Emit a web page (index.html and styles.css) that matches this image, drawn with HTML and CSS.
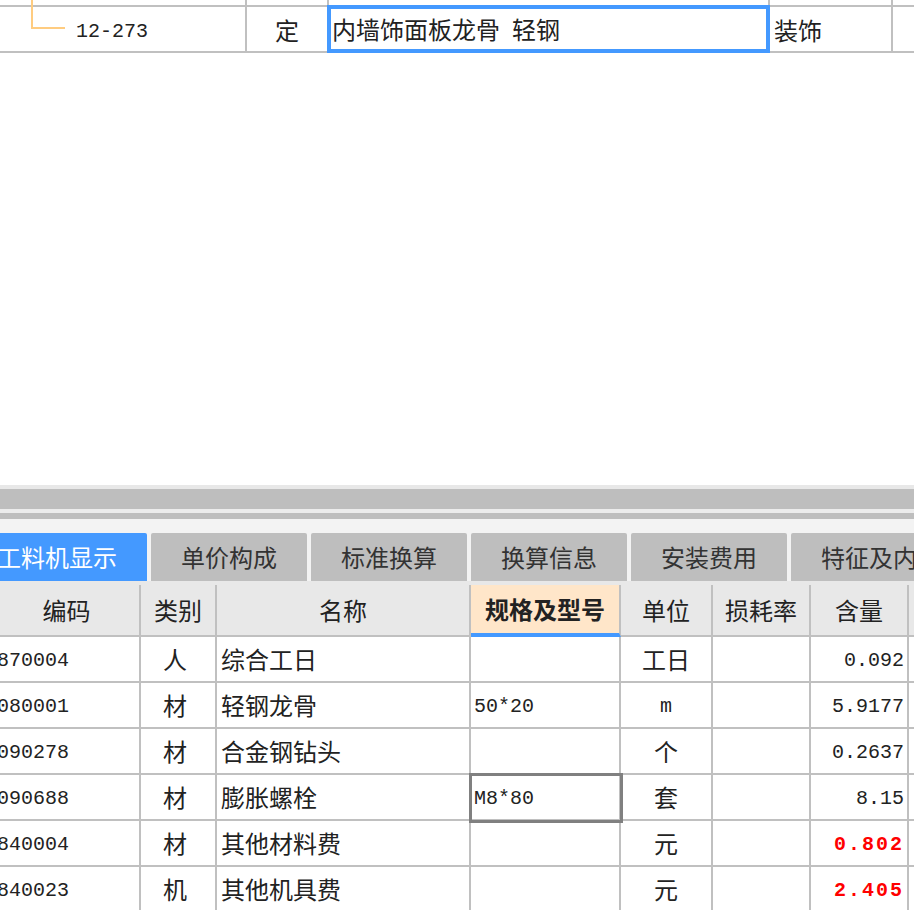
FILE: index.html
```html
<!DOCTYPE html>
<html lang="zh-CN">
<head>
<meta charset="utf-8">
<title>工料机显示</title>
<link rel="stylesheet" href="styles.css">
</head>
<body>
<div class="page">
  <section class="upper">
    <div class="urow prev">
      <div class="uc"></div><div class="uc"></div><div class="uc"></div><div class="uc"></div><div class="uc last"></div>
    </div>
    <div class="urow cur">
      <div class="uc code mono"><span class="tree"></span>12-273</div>
      <div class="uc type">定</div>
      <div class="uc name-sel">内墙饰面板龙骨&ensp;轻钢</div>
      <div class="uc major">装饰</div>
      <div class="uc last"></div>
    </div>
  </section>

  <div class="splitter">
    <div class="sp sp1"></div>
    <div class="sp sp2"></div>
    <div class="sp sp3"></div>
    <div class="sp sp4"></div>
  </div>

  <nav class="tabs">
    <div class="tab active">工料机显示</div>
    <div class="tab">单价构成</div>
    <div class="tab">标准换算</div>
    <div class="tab">换算信息</div>
    <div class="tab">安装费用</div>
    <div class="tab">特征及内容</div>
  </nav>

  <div class="grid">
    <div class="head">
      <div class="gr hrow">
        <div class="hc">编码</div>
        <div class="hc">类别</div>
        <div class="hc">名称</div>
        <div class="hc spec">规格及型号</div>
        <div class="hc">单位</div>
        <div class="hc">损耗率</div>
        <div class="hc">含量</div>
        <div class="hc last"></div>
      </div>
    </div>
    <div class="gr drow">
      <div class="dc code mono">870004</div><div class="dc cat">人</div><div class="dc name">综合工日</div><div class="dc spec"></div><div class="dc unit">工日</div><div class="dc"></div><div class="dc qty mono">0.092</div><div class="dc last"></div>
    </div>
    <div class="gr drow">
      <div class="dc code mono">080001</div><div class="dc cat">材</div><div class="dc name">轻钢龙骨</div><div class="dc spec mono">50*20</div><div class="dc unit mono">m</div><div class="dc"></div><div class="dc qty mono">5.9177</div><div class="dc last"></div>
    </div>
    <div class="gr drow">
      <div class="dc code mono">090278</div><div class="dc cat">材</div><div class="dc name">合金钢钻头</div><div class="dc spec"></div><div class="dc unit">个</div><div class="dc"></div><div class="dc qty mono">0.2637</div><div class="dc last"></div>
    </div>
    <div class="gr drow">
      <div class="dc code mono">090688</div><div class="dc cat">材</div><div class="dc name">膨胀螺栓</div><div class="dc spec mono focus">M8*80</div><div class="dc unit">套</div><div class="dc"></div><div class="dc qty mono">8.15</div><div class="dc last"></div>
    </div>
    <div class="gr drow">
      <div class="dc code mono">840004</div><div class="dc cat">材</div><div class="dc name">其他材料费</div><div class="dc spec"></div><div class="dc unit">元</div><div class="dc"></div><div class="dc qty mono red">0.802</div><div class="dc last"></div>
    </div>
    <div class="gr drow">
      <div class="dc code mono">840023</div><div class="dc cat">机</div><div class="dc name">其他机具费</div><div class="dc spec"></div><div class="dc unit">元</div><div class="dc"></div><div class="dc qty mono red">2.405</div><div class="dc last"></div>
    </div>
  </div>
</div>
</body>
</html>
```

FILE: styles.css
```css
* { box-sizing: border-box; }

html, body {
  margin: 0;
  padding: 0;
  background: #ffffff;
}

body {
  width: 914px;
  height: 910px;
  overflow: hidden;
  font-family: "Noto Sans CJK SC", "Noto Sans", sans-serif;
  font-size: 24px;
  color: #222222;
}

.page {
  width: 914px;
  height: 910px;
  overflow: hidden;
}

.mono {
  font-family: "Liberation Mono", "DejaVu Sans Mono", monospace;
  font-size: 20px;
}

/* ---------- upper grid ---------- */
.upper {
  height: 485px;
  background: #ffffff;
}

.urow {
  display: grid;
  white-space: nowrap;
}

.urow.prev {
  height: 5px;
  grid-template-rows: 5px;
  grid-template-columns: 247px 82px 441px 123px 1fr;
}

.urow.prev .uc {
  border-right: 2px solid #c0c0c0;
}

.urow.cur {
  height: 48px;
  grid-template-rows: 48px;
  grid-template-columns: 247px 80px 443px 123px 1fr;
}

.urow.cur .uc {
  border-top: 2px solid #c0c0c0;
  border-bottom: 2px solid #c0c0c0;
  line-height: 43px;
  padding-top: 1px;
}

.uc.last { border-right: none !important; }

.urow.cur .uc.code {
  position: relative;
  padding-left: 76px;
  padding-top: 6px;
  line-height: 38px;
  border-right: 2px solid #c0c0c0;
}

.tree {
  position: absolute;
  left: 31px;
  top: -7px;
  width: 34px;
  height: 29px;
  border-left: 2px solid #ffcc80;
  border-bottom: 2px solid #ffcc80;
}

.uc.type {
  text-align: center;
}

.urow.cur .uc.name-sel {
  border: 4px solid #4499ff;
  padding: 0 0 0 1px;
  line-height: 40px;
  overflow: hidden;
}

.uc.major {
  padding-left: 4px;
  border-right: 2px solid #c0c0c0;
}

/* ---------- splitter ---------- */
.sp1 { height: 4px; background: #e8e8e8; }
.sp2 { height: 20px; background: #bebebe; }
.sp3 { height: 4px; background: #ececec; }
.sp4 { height: 6px; background: #bebebe; }

/* ---------- tabs ---------- */
.tabs {
  display: flex;
  gap: 4px;
  height: 62px;
  padding-top: 14px;
  margin-left: -33px;
  background: #f3f3f3;
  white-space: nowrap;
}

.tab {
  flex: none;
  height: 48px;
  line-height: 48px;
  padding: 0 30px;
  background: #bebebe;
  color: #333333;
  border-radius: 2px 2px 0 0;
}

.tab.active {
  background: #4499ff;
  color: #ffffff;
}

/* ---------- lower grid ---------- */
.grid {
  margin-left: -6px;
  width: 930px;
}

.gr {
  display: grid;
  grid-template-columns: 147px 76px 254px 150px 92px 98px 98px 1fr;
  white-space: nowrap;
}

.head {
  background: #e8e8e8;
  padding-top: 4px;
}

.hrow {
  height: 52px;
  grid-template-rows: 52px;
}

.hc {
  border-right: 2px solid #c0c0c0;
  border-bottom: 2px solid #c0c0c0;
  text-align: center;
  line-height: 50px;
}

.hc.spec {
  background: #ffe6c9;
  border-bottom: 4px solid #4499ff;
  font-weight: bold;
  line-height: 48px;
}

.drow {
  height: 46px;
  grid-template-rows: 46px;
}

.dc {
  border-right: 2px solid #c0c0c0;
  border-bottom: 2px solid #c0c0c0;
  line-height: 44px;
  overflow: hidden;
}

.dc.mono {
  font-size: 20px;
  line-height: 38px;
  padding-top: 5px;
}

.dc.code { padding-left: 3px; }

.dc.cat {
  text-align: center;
  padding-right: 6px;
}

.dc.name { padding-left: 4px; }

.dc.spec { padding-left: 3px; }

.dc.focus {
  position: relative;
  z-index: 1;
  overflow: visible;
  outline: 3px solid #808080;
  outline-offset: -1px;
}

.dc.unit { text-align: center; }

.dc.qty {
  text-align: right;
  padding-right: 3px;
}

.dc.red {
  color: #ff0000;
  font-weight: bold;
  letter-spacing: 2px;
  padding-right: 3px;
}

.last { border-right: none; }
```
